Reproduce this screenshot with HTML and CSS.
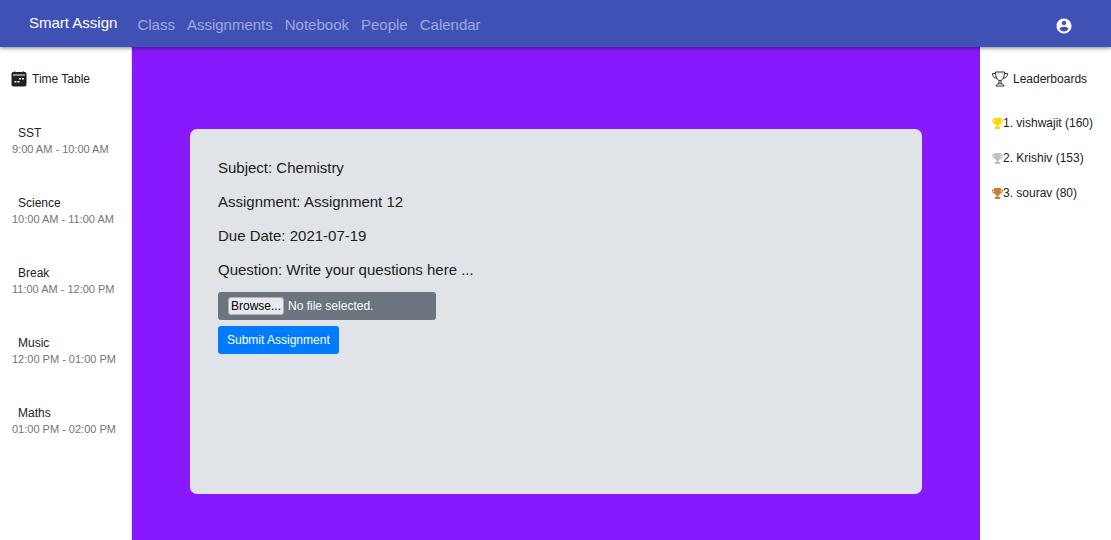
FILE: index.html
```html
<!DOCTYPE html>
<html lang="en">
<head>
<meta charset="utf-8">
<title>Smart Assign</title>
<link rel="stylesheet" href="styles.css">
</head>
<body>
<header class="appbar">
  <a class="brand" href="#">Smart Assign</a>
  <nav class="nav">
    <a href="#">Class</a>
    <a href="#">Assignments</a>
    <a href="#">Notebook</a>
    <a href="#">People</a>
    <a href="#">Calendar</a>
  </nav>
  <button class="account" type="button" aria-label="Account">
    <svg viewBox="0 0 24 24" width="18" height="18" fill="currentColor"><path d="M12 2C6.480 2 2 6.480 2 12s4.480 10 10 10 10-4.480 10-10S17.520 2 12 2zm0 3c1.660 0 3 1.340 3 3s-1.340 3-3 3-3-1.340-3-3 1.340-3 3-3zm0 14.200c-2.500 0-4.710-1.280-6-3.220.03-1.990 4-3.080 6-3.080 1.990 0 5.970 1.090 6 3.080-1.290 1.940-3.500 3.220-6 3.220z"/></svg>
  </button>
</header>
<div class="layout">
  <aside class="side side-left">
    <h2 class="side-title">
      <svg viewBox="0 0 16 16" width="16" height="16"><path fill="#212121" d="M3 .5h1.500V1h7V.5H13V1a2 2 0 0 1 2.500 2v10.500a2 2 0 0 1-2 2h-11a2 2 0 0 1-2-2V3A2 2 0 0 1 3 1z"/><path fill="#fff" d="M2 3.500h12v1H2zM8 7h2v1.500H8zM11 7h2v1.500h-2zM3.500 10h2v1.500h-2zM6.500 10h2v1.500h-2z"/></svg>
      Time Table
    </h2>
    <ul class="periods">
      <li><span class="period">SST</span><time>9:00 AM - 10:00 AM</time></li>
      <li><span class="period">Science</span><time>10:00 AM - 11:00 AM</time></li>
      <li><span class="period">Break</span><time>11:00 AM - 12:00 PM</time></li>
      <li><span class="period">Music</span><time>12:00 PM - 01:00 PM</time></li>
      <li><span class="period">Maths</span><time>01:00 PM - 02:00 PM</time></li>
    </ul>
  </aside>
  <main class="main">
    <form class="card">
      <div class="details">
        <p>Subject: Chemistry</p>
        <p>Assignment: Assignment 12</p>
        <p>Due Date: 2021-07-19</p>
        <p>Question: Write your questions here ...</p>
      </div>
      <label class="file">
        <input type="file" class="file-input">
        <span class="browse">Browse...</span>
        <span>No file selected.</span>
      </label>
      <button class="submit" type="submit">Submit Assignment</button>
    </form>
  </main>
  <aside class="side side-right">
    <h2 class="side-title">
      <svg viewBox="0 0 16 16" width="16" height="16" fill="none" stroke="#333"><path d="M3.500 1h9c0 5-1.500 8.500-4.500 8.500S3.500 6 3.500 1zM3.500 2.500H.5C.5 5.500 2 7 4.700 7.300M12.500 2.500h3c0 3-1.500 4.500-4.200 4.800M7 9.500v3.200M9 9.500v3.200M4 15h8c0-1.500-1.500-2-3-2.300H7C5.500 13 4 13.500 4 15z"/></svg>
      Leaderboards
    </h2>
    <ol class="leaders">
      <li class="gold"><svg viewBox="0 0 16 16" width="11" height="11" fill="currentColor"><path fill-rule="evenodd" d="M3 0h10v2h3C16 6 14.500 8 12 8.500 11.200 9.900 10.200 10.600 9.500 10.800V13H12v3H4v-3h2.500v-2.200C5.800 10.600 4.800 9.900 4 8.500 1.500 8 0 6 0 2h3zM1.500 3.800C1.600 5.300 2.200 6.200 3.400 6.700L3 3.800zM14.500 3.800H13l-.4 2.900c1.200-.5 1.800-1.400 1.900-2.900z"/></svg><span>1. vishwajit (160)</span></li>
      <li class="silver"><svg viewBox="0 0 16 16" width="11" height="11" fill="currentColor"><path fill-rule="evenodd" d="M3 0h10v2h3C16 6 14.500 8 12 8.500 11.200 9.900 10.200 10.600 9.500 10.800V13H12v3H4v-3h2.500v-2.200C5.800 10.600 4.800 9.900 4 8.500 1.500 8 0 6 0 2h3zM1.500 3.800C1.600 5.300 2.200 6.200 3.400 6.700L3 3.800zM14.500 3.800H13l-.4 2.900c1.200-.5 1.800-1.400 1.900-2.900z"/></svg><span>2. Krishiv (153)</span></li>
      <li class="bronze"><svg viewBox="0 0 16 16" width="11" height="11" fill="currentColor"><path fill-rule="evenodd" d="M3 0h10v2h3C16 6 14.500 8 12 8.500 11.200 9.900 10.200 10.600 9.500 10.800V13H12v3H4v-3h2.500v-2.200C5.800 10.600 4.800 9.900 4 8.500 1.500 8 0 6 0 2h3zM1.500 3.800C1.600 5.300 2.200 6.200 3.400 6.700L3 3.800zM14.500 3.800H13l-.4 2.900c1.200-.5 1.800-1.400 1.900-2.900z"/></svg><span>3. sourav (80)</span></li>
    </ol>
  </aside>
</div>
</body>
</html>
```
FILE: styles.css
```css
* { box-sizing: border-box; }
body {
  margin: 0;
  min-height: 100vh;
  display: flex;
  flex-direction: column;
  font-family: "Liberation Sans", Arial, sans-serif;
  font-size: 12px;
  line-height: 16px;
  color: #212121;
}
h2, p, ul, ol { margin: 0; padding: 0; }
ul, ol { list-style: none; }
svg { flex: none; display: block; }
button { font: inherit; border: 0; cursor: pointer; }

.appbar {
  position: relative;
  z-index: 1;
  display: flex;
  align-items: flex-start;
  padding: 14px 38px 11px 29px;
  background: #3f51b5;
  box-shadow: 0 1px 4px rgba(0, 0, 0, 0.5);
  font-size: 15px;
  line-height: 18px;
}
.appbar a { text-decoration: none; }
.brand { color: #fff; }
.nav { display: flex; flex: 1; gap: 12px; margin-left: 20px; padding: 2px 0; }
.nav a { color: rgba(255, 255, 255, 0.5); }
.account { padding: 3px 0 0; background: none; color: #fff; }

.layout {
  flex: 1;
  display: grid;
  grid-template-columns: 132px 1fr 131px;
}
.side { padding: 24px 0 24px 12px; background: #fff; }
.side-left { border-right: 1px solid #e0e0e0; }
.side-title {
  display: flex;
  align-items: center;
  gap: 5px;
  font-size: 12px;
  font-weight: 400;
}
.side-left .side-title { margin-left: -1px; }
.periods { display: grid; gap: 38px; margin-top: 38px; }
.period { display: block; padding-left: 6px; }
.periods time {
  display: block;
  font-size: 11px;
  color: #757575;
  white-space: nowrap;
}
.leaders { display: grid; gap: 19px; margin-top: 28px; }
.leaders li { display: flex; align-items: center; white-space: nowrap; }
.leaders span { color: #212121; }
.gold { color: #ffd700; }
.silver { color: #c0c0c0; }
.bronze { color: #cd7f32; }

.main {
  display: flex;
  padding: 82px 58px 46px;
  background: #8819ff;
}
.card {
  flex: 1;
  display: flex;
  flex-direction: column;
  align-items: flex-start;
  padding: 28px;
  border-radius: 7px;
  background: #e0e4e8;
}
.details {
  display: grid;
  gap: 12px;
  margin-bottom: 11px;
  font-size: 15px;
  line-height: 22px;
}
.file {
  position: relative;
  display: flex;
  align-items: center;
  gap: 4px;
  width: 218px;
  padding: 5px 10px;
  border-radius: 3px;
  background: #6c757d;
  color: #fff;
}
.file span { line-height: 16px; }
.file-input {
  position: absolute;
  inset: 0;
  width: 100%;
  opacity: 0;
  cursor: pointer;
}
.file .browse {
  padding: 0 2px;
  border: 1px solid #b0b0b8;
  border-radius: 3px;
  background: #e9e9ed;
  color: #000;
}
.submit {
  margin-top: 6px;
  padding: 6px 9px;
  border-radius: 3px;
  background: #007bff;
  color: #fff;
}
```
